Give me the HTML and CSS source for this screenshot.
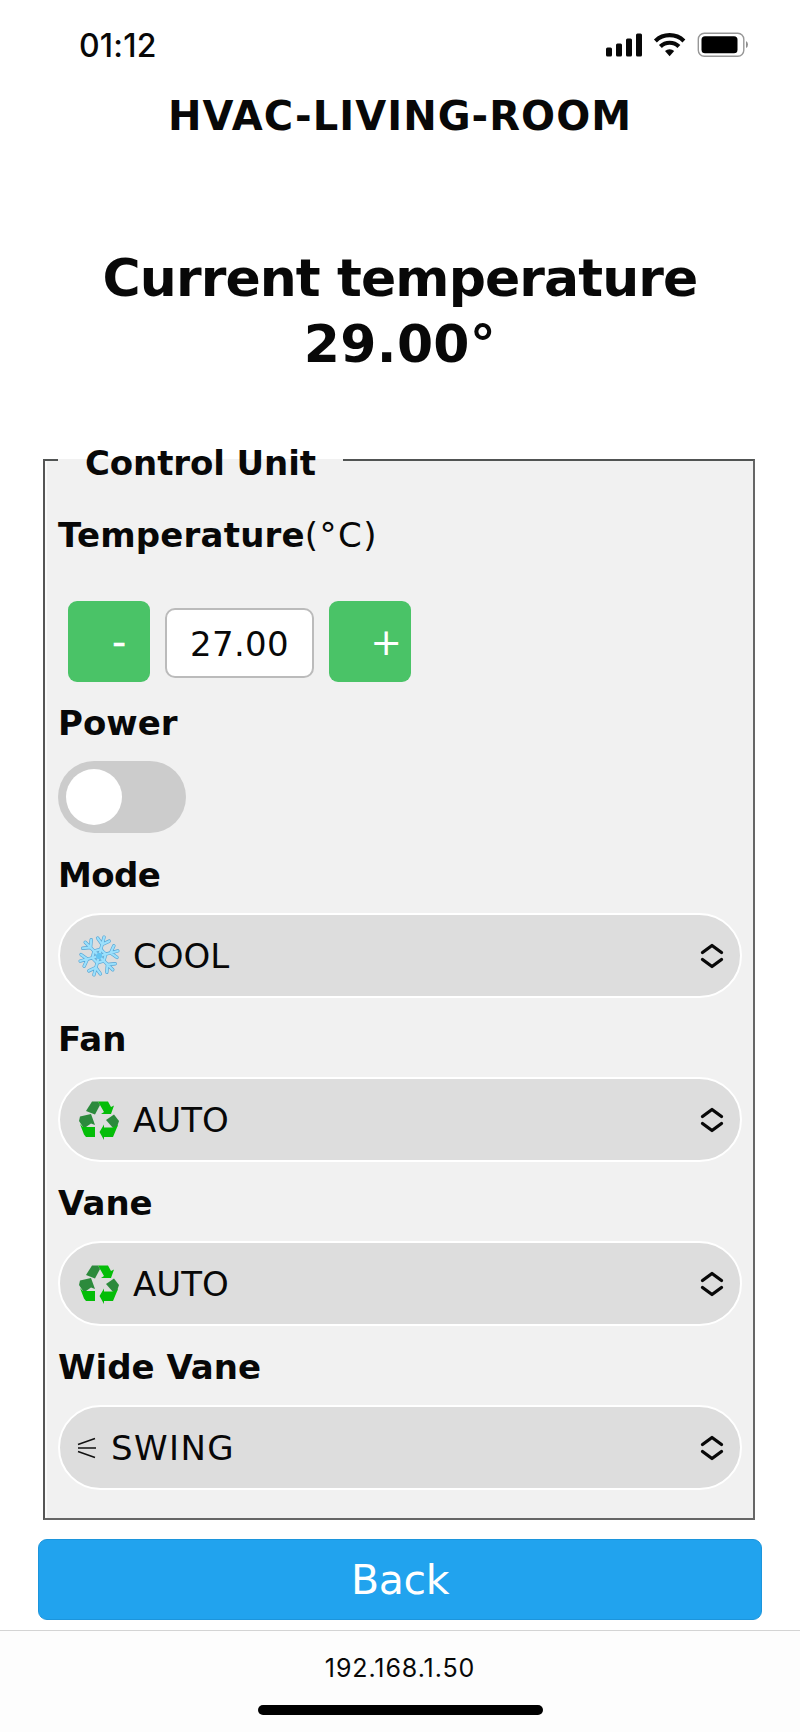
FILE: index.html
```html
<!DOCTYPE html>
<html lang="en">
<head>
<meta charset="utf-8">
<title>HVAC-LIVING-ROOM</title>
<link rel="stylesheet" href="styles.css">
</head>
<body>
<svg width="0" height="0" class="defs" aria-hidden="true">
  <defs>
    <g id="branch" fill="none" stroke-linecap="round">
      <path d="M0 -3V-19.500M0 -12l-6 -5M0 -12l6 -5"/>
    </g>
    <g id="flake">
      <use href="#branch"/><use href="#branch" transform="rotate(60)"/><use href="#branch" transform="rotate(120)"/>
      <use href="#branch" transform="rotate(180)"/><use href="#branch" transform="rotate(240)"/><use href="#branch" transform="rotate(300)"/>
      <path d="M0 -7L3 -5L6 -3.500V3.500L0 7L-6 3.500V-3.500Z" fill="none"/>
    </g>
    <symbol id="recycle" viewBox="0 0 42 40">
      <path fill="#04bd08" d="M14 1.500H30L33 7L36 5.500L33 14H23L26 12L20 1.500Z"/>
      <path fill="#2c8a3c" d="M8 11L14 1.500H20L22 5L17 14.500Z"/>
      <path fill="#2c8a3c" d="M2 16.500L13 14L17 25L13 23.500L8 27H5L1 21Z"/>
      <path fill="#04bd08" d="M2 24L5 27H17V37H8L6 34.500Z"/>
      <path fill="#2c8a3c" d="M28 20L36 14.500L41 21L39 27L35 28Z"/>
      <path fill="#04bd08" d="M21.500 32L26 24.500V27.500H35L40 25L35 37H26V40Z"/>
    </symbol>
    <symbol id="chevrons" viewBox="0 0 24 28">
      <path d="M2.500 10.500L12 3.500L21.500 10.500M2.500 17.500L12 24.500L21.500 17.500" fill="none" stroke="#080808" stroke-width="3.300" stroke-linecap="round" stroke-linejoin="round"/>
    </symbol>
  </defs>
</svg>

<header class="status">
  <time class="clock">01:12</time>
  <svg class="signals" width="146" height="30" viewBox="0 0 146 30">
    <g fill="#080808">
      <rect x="1" y="15.500" width="6" height="9" rx="1.500"/>
      <rect x="11" y="11.500" width="6" height="13" rx="1.500"/>
      <rect x="21" y="6.500" width="6" height="18" rx="1.500"/>
      <rect x="31" y="1.500" width="6" height="23" rx="1.500"/>
      <path d="M60 19.100a6.500 6.500 0 0 1 9.200 0L64.600 24.200Z"/>
    </g>
    <g fill="none" stroke="#080808" stroke-width="4.200">
      <path d="M50.400 8.900a20.700 20.700 0 0 1 28.500 0"/>
      <path d="M55.400 14.500a13.300 13.300 0 0 1 18.500 0"/>
    </g>
    <rect x="93.300" y="1.200" width="45.500" height="23" rx="6" fill="none" stroke="#979797" stroke-width="1.400"/>
    <rect x="96.500" y="4.300" width="36" height="17" rx="3.500" fill="#000"/>
    <path d="M141 9v7q2-1 2-3.500t-2-3.500" fill="#8f8f8f"/>
  </svg>
</header>

<h1 class="title">HVAC-LIVING-ROOM</h1>
<h2 class="current"><span class="caption">Current temperature</span><span class="reading">29.00°</span></h2>

<fieldset class="unit">
  <legend>Control Unit</legend>
  <div class="label temp"><b>Temperature</b><span class="deg">(°C)</span></div>
  <div class="stepper">
    <button class="step minus">-</button>
    <div class="value">27.00</div>
    <button class="step plus">+</button>
  </div>
  <div class="label power">Power</div>
  <div class="toggle"><span class="knob"></span></div>

  <div class="label mode">Mode</div>
  <div class="select">
    <svg class="emoji" width="42" height="42" viewBox="-21 -21 42 42">
      <g transform="rotate(15)">
        <use href="#flake" stroke="#55a4d4" stroke-width="3.400"/>
        <use href="#flake" stroke="#9be0fc" stroke-width="2.200"/>
        <circle r="3" fill="#62c5f3"/>
      </g>
    </svg>
    <span class="option cool">COOL</span><svg class="chev"><use href="#chevrons"/></svg>
  </div>

  <div class="label">Fan</div>
  <div class="select">
    <svg class="emoji"><use href="#recycle"/></svg>
    <span class="option auto">AUTO</span><svg class="chev"><use href="#chevrons"/></svg>
  </div>

  <div class="label">Vane</div>
  <div class="select">
    <svg class="emoji"><use href="#recycle"/></svg>
    <span class="option auto">AUTO</span><svg class="chev"><use href="#chevrons"/></svg>
  </div>

  <div class="label">Wide Vane</div>
  <div class="select">
    <svg class="swing-icon" width="20" height="22" viewBox="0 0 20 22"><path d="M1 7.500L18 1.500M1 11H19M1 14.500L18 20.500" fill="none" stroke="#111" stroke-width="1.500"/></svg>
    <span class="option swing">SWING</span><svg class="chev"><use href="#chevrons"/></svg>
  </div>
</fieldset>

<button class="back">Back</button>
<footer class="browser"><span class="address">192.168.1.50</span><div class="home"></div></footer>
</body>
</html>
```
FILE: styles.css
```css
* { box-sizing: border-box; }
body {
  margin: 0;
  width: 800px;
  height: 1732px;
  overflow: hidden;
  display: flex;
  flex-direction: column;
  background: #fff;
  color: #080808;
  font: 34px/40px "DejaVu Sans", Verdana, sans-serif;
}
.defs { position: absolute; }
button { border: 0; margin: 0; font: inherit; color: #fff; padding: 0; }
svg { flex: none; display: block; }

.status {
  height: 91px;
  padding: 32px 49px 0 79px;
  display: flex;
  justify-content: space-between;
  align-items: flex-start;
}
.clock {
  font: 500 32px/28px Inter, sans-serif;
  letter-spacing: 0.2px;
}
.title {
  margin: 0;
  font-size: 40px;
  line-height: 50px;
  letter-spacing: 1.05px;
  text-align: center;
}
.current {
  margin: 104px 0 0;
  font-size: 52px;
  line-height: 66px;
  display: flex;
  flex-direction: column;
  align-items: center;
}
.caption { letter-spacing: -0.9px; }
.reading { letter-spacing: 0.3px; }

.unit {
  margin: 60px 45px 0 43px;
  height: 1083px;
  padding: 0 11px 0 13px;
  border-style: solid;
  border-width: 2px;
  border-color: #515453 #666 #666 #555;
  background: #f1f1f1;
  box-shadow: inset 2px 0 #fafafa;
  min-width: 0;
}
legend {
  padding: 6px 27px 0;
  font-weight: bold;
  letter-spacing: -0.1px;
}
.label { font-weight: bold; margin: 21px 0 18px; height: 40px; }
.label.temp { margin: 32px 0 46px; display: flex; letter-spacing: 0.2px; }
.label.power { margin-top: 21px; margin-bottom: 18px; }
.label.mode { letter-spacing: -0.6px; margin-top: 22px; }
.deg { font-weight: normal; letter-spacing: 1.5px; }
.stepper {
  display: flex;
  align-items: center;
  gap: 15px;
  padding-left: 10px;
  height: 81px;
}
.step {
  width: 82px;
  height: 81px;
  border-radius: 9px;
  background: #4ac367;
  text-align: right;
  font-size: 38px;
}
.minus { padding-right: 24px; -webkit-text-stroke: 0.6px #fff; }
.plus { padding-right: 9px; }
.value {
  width: 149px;
  height: 70px;
  margin-top: 2px;
  border: 2px solid #bbb;
  border-radius: 10px;
  background: #fff;
  line-height: 68px;
  letter-spacing: 0.3px;
  text-align: center;
}
.toggle {
  width: 128px;
  height: 72px;
  border-radius: 36px;
  background: #ccc;
  padding: 8px;
}
.knob {
  display: block;
  width: 56px;
  height: 56px;
  border-radius: 50%;
  background: #fff;
}
.select {
  height: 85px;
  border: 2px solid #fff;
  border-radius: 43px;
  background: #ddd;
  display: flex;
  align-items: center;
  padding: 0 16px 0 18px;
}
.emoji { width: 42px; height: 42px; margin-right: 13px; }
.swing-icon { margin: 0 14px 0 -1px; }
.option { flex: 1; }
.swing { letter-spacing: 1.4px; }
.chev { width: 24px; height: 28px; }

.back {
  margin: 19px 38px 10px;
  height: 81px;
  flex: none;
  border-radius: 9px;
  background: #21a3ee;
  font-size: 41px;
  letter-spacing: -0.4px;
  border: 1px solid #1c95dc;
}
.browser {
  flex: 1;
  border-top: 1px solid #d4d4d4;
  background: #fdfdfd;
  display: flex;
  flex-direction: column;
  align-items: center;
}
.address {
  font: 25px/30px Inter, sans-serif;
  letter-spacing: 0.9px;
  margin-top: 22px;
}
.home {
  width: 285px;
  height: 10px;
  margin-top: 22px;
  border-radius: 5px;
  background: #000;
}
```
